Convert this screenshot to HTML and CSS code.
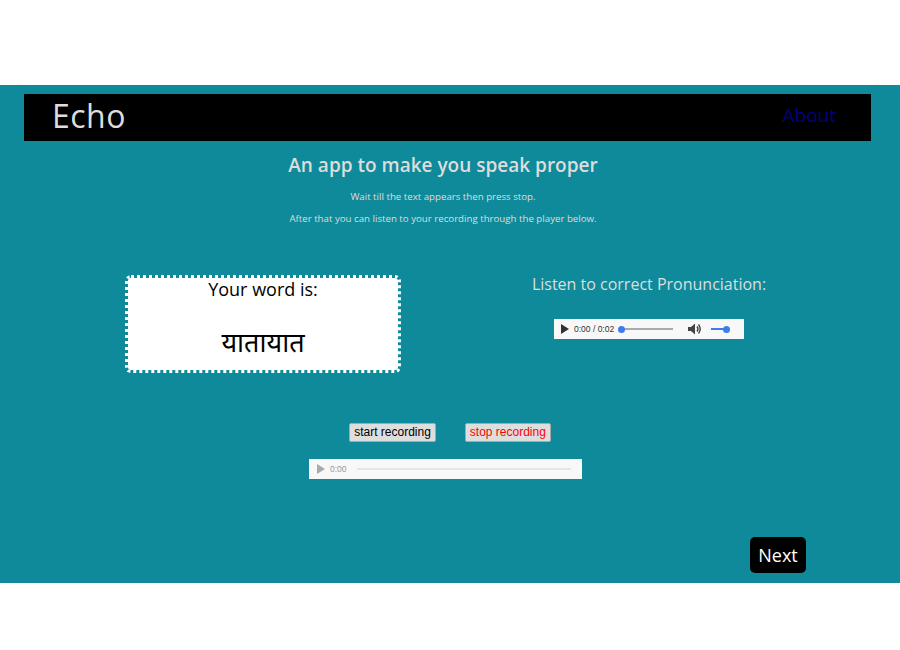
FILE: index.html
```html
<!DOCTYPE html>
<html>
<head>
<meta charset="utf-8">
<link rel="stylesheet" href="styles.css">
</head>
<body>
<div class="top-space"></div>
<main class="app">
  <header class="navbar">
    <span class="brand">Echo</span>
    <a class="about" href="#">About</a>
  </header>
  <section class="intro">
    <h1 class="title">An app to make you speak proper</h1>
    <p class="sub sub-first">Wait till the text appears then press stop.</p>
    <p class="sub">After that you can listen to your recording through the player below.</p>
  </section>
  <section class="columns">
    <div class="word-box">
      <div class="word-label">Your word is:</div>
      <div class="word">यातायात</div>
    </div>
    <div class="listen">
      <div class="listen-label">Listen to correct Pronunciation:</div>
      <div class="player player-small">
        <svg class="play" width="8" height="10" viewBox="0 0 8 10"><path d="M0 0 L8 5 L0 10 Z" fill="#333"/></svg>
        <span class="time">0:00 / 0:02</span>
        <div class="track"><span class="knob"></span></div>
        <svg class="speaker" width="14" height="12" viewBox="0 0 14 12"><path d="M0 4 H3 L7 0.5 V11.5 L3 8 H0 Z" fill="#444"/><path d="M9 3.5 Q11 6 9 8.5" stroke="#444" stroke-width="1.4" fill="none"/><path d="M10.5 1.5 Q14 6 10.5 10.5" stroke="#444" stroke-width="1.4" fill="none"/></svg>
        <div class="vol"><span class="vknob"></span></div>
      </div>
    </div>
  </section>
  <section class="recorder">
    <div class="buttons">
      <button class="btn">start recording</button>
      <button class="btn btn-stop">stop recording</button>
    </div>
    <div class="player player-rec">
      <svg class="play" width="8" height="10" viewBox="0 0 8 10"><path d="M0 0 L8 5 L0 10 Z" fill="#aaa"/></svg>
      <span class="time time-dim">0:00</span>
      <div class="track track-dim"></div>
    </div>
  </section>
  <div class="footer-row">
    <button class="next">Next</button>
  </div>
</main>
</body>
</html>
```

FILE: styles.css
```css
html, body {
  margin: 0;
  padding: 0;
  background: #fff;
}
body {
  font-family: "Open Sans", "Noto Sans", sans-serif;
  color: #ddd;
}
.top-space {
  height: 85px;
}
.app {
  background: #0f8a9b;
  height: 498px;
  padding-top: 9px;
  box-sizing: border-box;
}
.navbar {
  margin: 0 29px 0 24px;
  height: 47px;
  background: #000;
  display: flex;
  align-items: center;
  justify-content: space-between;
  padding: 0 35px 5px 28px;
  box-sizing: border-box;
}
.brand {
  font-size: 32px;
  color: #ddd;
  letter-spacing: 0.5px;
}
.about {
  font-size: 19px;
  color: #000080;
  text-decoration: none;
}
.intro {
  text-align: center;
  padding-right: 14px;
}
.title {
  margin: 11px 0 0;
  font-size: 19px;
  font-weight: 600;
  line-height: 26px;
  color: #ddd;
}
.sub {
  margin: 6px 0 0;
  font-size: 9.7px;
  line-height: 16px;
  color: #ddd;
}
.sub-first {
  margin-top: 11px;
}
.columns {
  display: flex;
  margin-top: 48px;
  padding-left: 125px;
  align-items: flex-start;
}
.word-box {
  width: 276px;
  height: 98px;
  box-sizing: border-box;
  background: #fff;
  background-clip: padding-box;
  border: 3px dotted #fff;
  border-radius: 6px;
  text-align: center;
  color: #000;
}
.word-label {
  font-size: 18px;
  line-height: 22px;
}
.word {
  font-family: "Noto Sans", "Noto Sans CJK SC", sans-serif;
  font-size: 27px;
  line-height: 36px;
  margin-top: 24px;
}
.listen {
  margin-left: 98px;
  width: 300px;
  display: flex;
  flex-direction: column;
  align-items: center;
}
.listen-label {
  font-size: 16px;
  line-height: 20px;
  margin-top: -1px;
  color: #ddd;
}
.player {
  background: #f8f8f8;
  height: 20px;
  display: flex;
  align-items: center;
  box-sizing: border-box;
}
.player-small {
  width: 190px;
  margin-top: 25px;
  padding: 0 10px 0 7px;
}
.play {
  flex: none;
}
.time {
  font-family: "Liberation Sans", Arial, sans-serif;
  font-size: 8.5px;
  color: #333;
  margin-left: 5px;
  white-space: nowrap;
}
.time-dim {
  color: #999;
}
.track {
  position: relative;
  width: 52px;
  height: 2px;
  background: #aaa;
  margin-left: 7px;
}
.knob {
  position: absolute;
  left: -3px;
  top: -2.5px;
  width: 7px;
  height: 7px;
  border-radius: 50%;
  background: #3b7ded;
}
.speaker {
  margin-left: 15px;
  flex: none;
}
.vol {
  position: relative;
  width: 16px;
  height: 2px;
  background: #3b7ded;
  margin-left: 9px;
}
.vknob {
  position: absolute;
  right: -3px;
  top: -2.5px;
  width: 7px;
  height: 7px;
  border-radius: 50%;
  background: #3b7ded;
}
.recorder {
  display: flex;
  flex-direction: column;
  align-items: center;
  margin-top: 50px;
}
.buttons {
  display: flex;
  gap: 29px;
}
.btn {
  font-family: "Liberation Sans", Arial, sans-serif;
  font-size: 12px;
  height: 19px;
  padding: 0 4px;
  background: #dedede;
  border: 1px solid #a8a8a8;
  border-radius: 2px;
  color: #000;
  line-height: 17px;
}
.btn-stop {
  color: #f00;
}
.player-rec {
  width: 273px;
  margin-top: 17px;
  margin-right: 9px;
  padding: 0 8px;
}
.track-dim {
  flex: 1;
  background: #e6e6e6;
  margin-left: 10px;
  margin-right: 3px;
}
.footer-row {
  display: flex;
  justify-content: flex-end;
  padding-right: 94px;
  margin-top: 58px;
}
.next {
  font-family: "Open Sans", "Noto Sans", sans-serif;
  font-size: 18px;
  color: #fff;
  background: #000;
  border: none;
  border-radius: 5px;
  width: 56px;
  height: 36px;
  padding: 0;
}
```
